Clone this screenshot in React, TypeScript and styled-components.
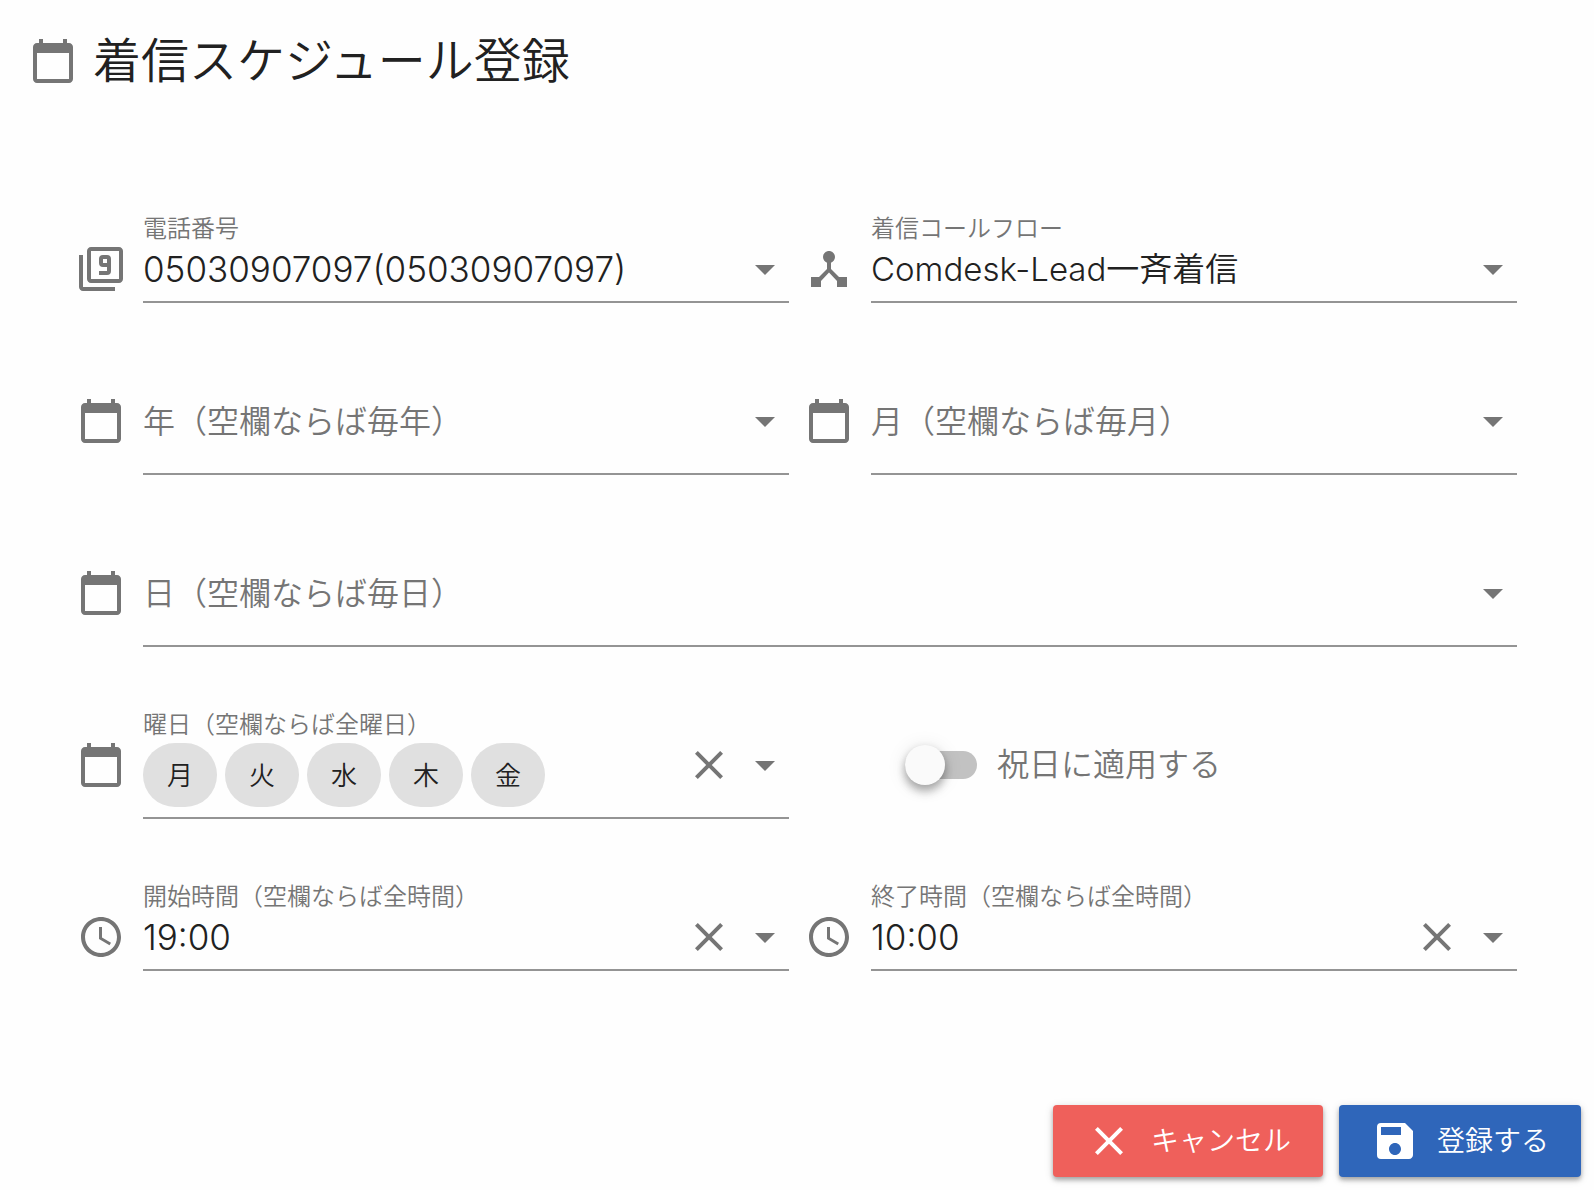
import React, { useState } from "react";
import styled, { createGlobalStyle } from "styled-components";
import {
  MdAccessTime,
  MdArrowDropDown,
  MdCalendarToday,
  MdClose,
  MdDeviceHub,
  MdFilter9,
  MdSave,
} from "react-icons/md";

const GlobalStyle = createGlobalStyle`
  *, *::before, *::after { box-sizing: border-box; }
  body {
    margin: 0;
    background: #fefefe;
    color: #212121;
    font-family: Inter, "Noto Sans CJK JP", sans-serif;
    font-weight: 350;
  }
  button, select, input { font: inherit; color: inherit; }
`;

const Page = styled.main`
  min-height: 100vh;
  display: flex;
  flex-direction: column;
`;

const Header = styled.header`
  display: flex;
  align-items: center;
  gap: 16px;
  padding: 37px 29px 0;
`;

const Title = styled.h1`
  margin: 0;
  font-size: 48px;
  font-weight: 350;
  line-height: 48px;
`;

const Icon = styled.span`
  display: flex;
  flex: none;
  font-size: 48px;
  color: #757575;
`;

const Form = styled.form`
  flex: 1;
  display: flex;
  flex-direction: column;
`;

const Fields = styled.div`
  display: grid;
  grid-template-columns: 1fr 1fr;
  gap: 65px 16px;
  padding: 131px 77px 64px;
`;

const Field = styled.div<{ $wide?: boolean }>`
  display: flex;
  gap: 18px;
  min-width: 0;
  grid-column: ${(p) => (p.$wide ? "1 / -1" : "auto")};

  & > ${Icon} {
    margin-top: 29px;
  }
`;

const Body = styled.div<{ $tall?: boolean }>`
  flex: 1;
  min-width: 0;
  min-height: ${(p) => (p.$tall ? 107 : 87)}px;
  border-bottom: 2px solid #949494;
`;

const LabelSlot = styled.div`
  height: 29px;
  font-size: 24px;
  line-height: 26px;
  color: #757575;
  white-space: nowrap;
`;

const Line = styled.div`
  display: flex;
  align-items: flex-start;
`;

const Select = styled.select<{ $kind: "empty" | "text" | "digits" }>`
  flex: 1;
  min-width: 0;
  height: 48px;
  padding: 0;
  border: 0;
  outline: 0;
  appearance: none;
  background: transparent;
  font-size: ${(p) => ({ empty: 32, text: 33, digits: 35 })[p.$kind]}px;
  font-weight: ${(p) => (p.$kind === "digits" ? 300 : 350)};
  color: ${(p) => (p.$kind === "empty" ? "#757575" : "#212121")};
`;

const IconButton = styled.button`
  display: flex;
  flex: none;
  margin: 0 8px 0 0;
  padding: 0;
  border: 0;
  background: none;
  font-size: 48px;
  color: #757575;
  cursor: pointer;

  &:last-child {
    margin-right: 0;
  }
`;

const Chips = styled.ul`
  flex: 1;
  display: flex;
  flex-wrap: wrap;
  gap: 8px;
  margin: 2px 0 8px;
  padding: 0;
  list-style: none;
`;

const Chip = styled.li`
  height: 64px;
  padding: 0 24px;
  border-radius: 32px;
  background: #e0e0e0;
  font-size: 26px;
  line-height: 66px;
`;

const SwitchRow = styled.label`
  display: flex;
  align-items: center;
  align-self: start;
  gap: 20px;
  height: 48px;
  margin: 29px 0 0 100px;
  font-size: 32px;
  line-height: 48px;
  color: #757575;
  cursor: pointer;
`;

const Switch = styled.input`
  appearance: none;
  display: flex;
  align-items: center;
  flex: none;
  width: 72px;
  height: 28px;
  margin: 0;
  border-radius: 14px;
  background: #c2c2c2;
  cursor: pointer;

  &::before {
    content: "";
    width: 40px;
    height: 40px;
    border-radius: 50%;
    background: #fafafa;
    box-shadow: 0 4px 8px rgba(0, 0, 0, 0.24), 0 8px 10px rgba(0, 0, 0, 0.12),
      0 2px 20px rgba(0, 0, 0, 0.1);
  }

  &:checked {
    justify-content: flex-end;
    background: #97b2dc;
  }
`;

const Actions = styled.footer`
  display: flex;
  justify-content: flex-end;
  gap: 16px;
  margin-top: auto;
  padding: 0 13px 13px;
`;

const ActionButton = styled.button<{ $color: string }>`
  display: flex;
  align-items: center;
  gap: 18px;
  height: 72px;
  padding: 0 32px;
  border: 0;
  border-radius: 4px;
  background: ${(p) => p.$color};
  color: #fff;
  font-size: 28px;
  line-height: 48px;
  box-shadow: 0 3px 4px rgba(0, 0, 0, 0.28), 0 2px 10px rgba(0, 0, 0, 0.14);
  cursor: pointer;

  ${Icon} {
    color: inherit;
  }
`;

type SelectFieldProps = {
  id: string;
  icon: React.ReactNode;
  label: string;
  options: string[];
  initial?: string;
  wide?: boolean;
  clearable?: boolean;
};

function SelectField({ id, icon, label, options, initial = "", wide, clearable }: SelectFieldProps) {
  const [value, setValue] = useState(initial);
  const floating = initial !== "";
  const kind = value === "" ? "empty" : /^\d/.test(value) ? "digits" : "text";
  return (
    <Field $wide={wide}>
      <Icon>{icon}</Icon>
      <Body $tall={!floating}>
        <LabelSlot>{floating && <label htmlFor={id}>{label}</label>}</LabelSlot>
        <Line>
          <Select
            id={id}
            aria-label={label}
            value={value}
            $kind={kind}
            onChange={(e) => setValue(e.target.value)}
          >
            <option value="">{floating ? "" : label}</option>
            {options.map((o) => (
              <option key={o}>{o}</option>
            ))}
          </Select>
          {clearable && (
            <IconButton type="button" aria-label="クリア" onClick={() => setValue("")}>
              <MdClose />
            </IconButton>
          )}
          <Icon>
            <MdArrowDropDown />
          </Icon>
        </Line>
      </Body>
    </Field>
  );
}

function WeekdayField() {
  const [days, setDays] = useState(["月", "火", "水", "木", "金"]);
  return (
    <Field role="group" aria-labelledby="weekday-label">
      <Icon>
        <MdCalendarToday />
      </Icon>
      <Body $tall>
        <LabelSlot id="weekday-label">曜日（空欄ならば全曜日）</LabelSlot>
        <Line>
          <Chips>
            {days.map((d) => (
              <Chip key={d}>{d}</Chip>
            ))}
          </Chips>
          <IconButton type="button" aria-label="クリア" onClick={() => setDays([])}>
            <MdClose />
          </IconButton>
          <IconButton type="button" aria-label="曜日を選択">
            <MdArrowDropDown />
          </IconButton>
        </Line>
      </Body>
    </Field>
  );
}

const range = (from: number, to: number, suffix: string) =>
  Array.from({ length: to - from + 1 }, (_, i) => `${from + i}${suffix}`);

const hours = Array.from({ length: 24 }, (_, i) => `${String(i).padStart(2, "0")}:00`);

export default function App() {
  return (
    <Page>
      <GlobalStyle />
      <Header>
        <Icon>
          <MdCalendarToday />
        </Icon>
        <Title>着信スケジュール登録</Title>
      </Header>
      <Form onSubmit={(e) => e.preventDefault()}>
        <Fields>
          <SelectField
            id="phone"
            icon={<MdFilter9 />}
            label="電話番号"
            options={["05030907097(05030907097)"]}
            initial="05030907097(05030907097)"
          />
          <SelectField
            id="flow"
            icon={<MdDeviceHub />}
            label="着信コールフロー"
            options={["Comdesk-Lead一斉着信"]}
            initial="Comdesk-Lead一斉着信"
          />
          <SelectField
            id="year"
            icon={<MdCalendarToday />}
            label="年（空欄ならば毎年）"
            options={range(2020, 2030, "年")}
          />
          <SelectField
            id="month"
            icon={<MdCalendarToday />}
            label="月（空欄ならば毎月）"
            options={range(1, 12, "月")}
          />
          <SelectField
            id="day"
            icon={<MdCalendarToday />}
            label="日（空欄ならば毎日）"
            options={range(1, 31, "日")}
            wide
          />
          <WeekdayField />
          <SwitchRow>
            <Switch type="checkbox" role="switch" />
            祝日に適用する
          </SwitchRow>
          <SelectField
            id="start"
            icon={<MdAccessTime />}
            label="開始時間（空欄ならば全時間）"
            options={hours}
            initial="19:00"
            clearable
          />
          <SelectField
            id="end"
            icon={<MdAccessTime />}
            label="終了時間（空欄ならば全時間）"
            options={hours}
            initial="10:00"
            clearable
          />
        </Fields>
        <Actions>
          <ActionButton type="button" $color="#ef605b">
            <Icon>
              <MdClose />
            </Icon>
            キャンセル
          </ActionButton>
          <ActionButton type="submit" $color="#2f66ba">
            <Icon>
              <MdSave />
            </Icon>
            登録する
          </ActionButton>
        </Actions>
      </Form>
    </Page>
  );
}
